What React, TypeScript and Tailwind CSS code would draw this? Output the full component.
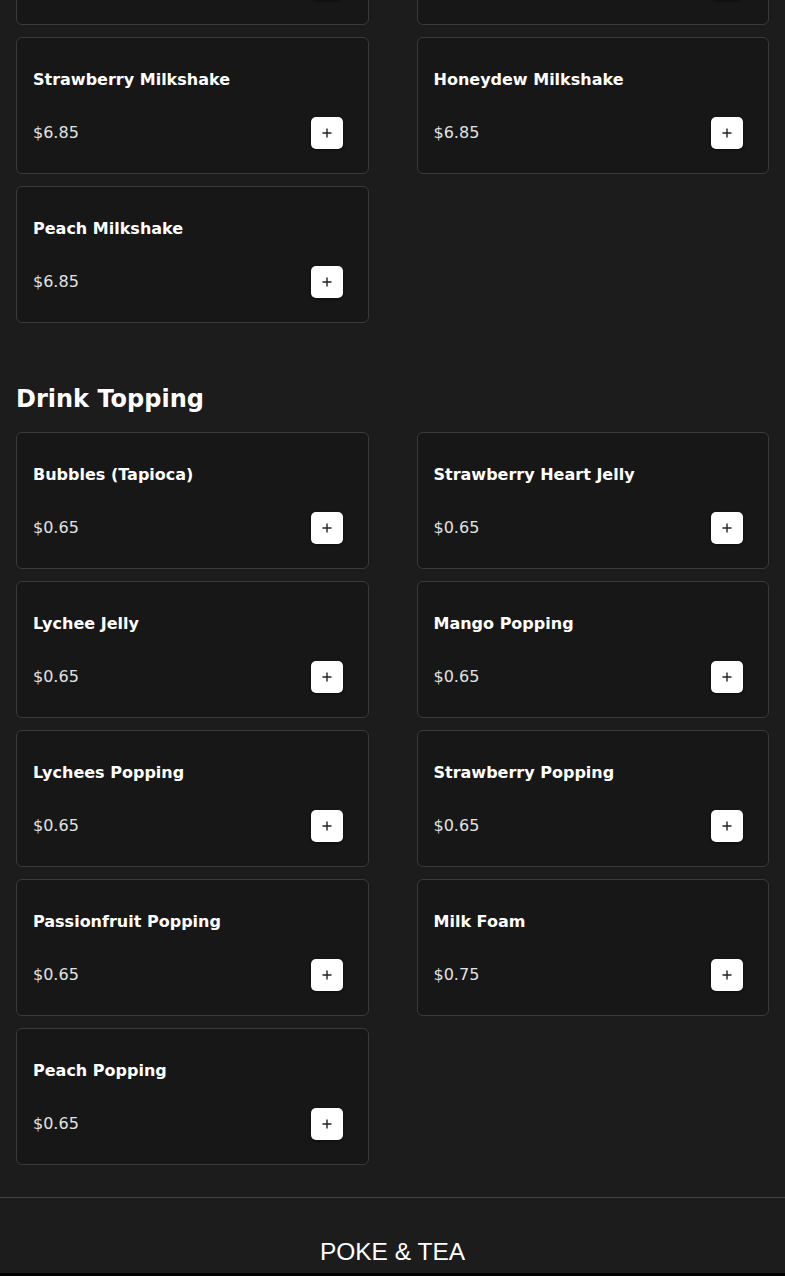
import React from 'react'

type Item = { name: string; price: string }

const TOP_ROW: Item[] = [
  { name: '', price: '' },
  { name: '', price: '' },
]

const MILKSHAKES: Item[] = [
  { name: 'Strawberry Milkshake', price: '$6.85' },
  { name: 'Honeydew Milkshake', price: '$6.85' },
  { name: 'Peach Milkshake', price: '$6.85' },
]

const TOPPINGS: Item[] = [
  { name: 'Bubbles (Tapioca)', price: '$0.65' },
  { name: 'Strawberry Heart Jelly', price: '$0.65' },
  { name: 'Lychee Jelly', price: '$0.65' },
  { name: 'Mango Popping', price: '$0.65' },
  { name: 'Lychees Popping', price: '$0.65' },
  { name: 'Strawberry Popping', price: '$0.65' },
  { name: 'Passionfruit Popping', price: '$0.65' },
  { name: 'Milk Foam', price: '$0.75' },
  { name: 'Peach Popping', price: '$0.65' },
]

function ItemCard({ item }: { item: Item }) {
  return (
    <div className="h-[137px] rounded-md border border-[#3a3a3a] bg-[#171717] px-4 pt-[30px] pb-6 flex flex-col">
      <div className="h-6 text-base leading-6 font-bold text-white">{item.name}</div>
      <div className="mt-[25px] flex items-center justify-between">
        <span className="h-6 text-base leading-6 text-[#e2e2e2]">{item.price}</span>
        <button className="mr-[9px] h-8 w-8 rounded-[5px] bg-white flex items-center justify-center shadow-[0_1px_3px_rgba(0,0,0,0.5)]">
          <svg width="10" height="10" viewBox="0 0 10 10">
            <path d="M5 0.5v9M0.5 5h9" stroke="#222" strokeWidth="1.4" />
          </svg>
        </button>
      </div>
    </div>
  )
}

function Grid({ items, className = '' }: { items: Item[]; className?: string }) {
  return (
    <div className={`grid grid-cols-2 gap-x-12 gap-y-3 ${className}`}>
      {items.map((it, i) => (
        <ItemCard key={i} item={it} />
      ))}
    </div>
  )
}

export default function App() {
  return (
    <div className="min-h-screen bg-[#1c1c1c] overflow-hidden" style={{ fontFamily: '"DejaVu Sans", sans-serif' }}>
      <div className="px-4">
        <Grid items={[...TOP_ROW, ...MILKSHAKES]} className="-mt-[112px]" />

        <h2 className="mt-[60px] mb-[17px] text-2xl leading-8 font-bold text-white">Drink Topping</h2>
        <Grid items={TOPPINGS} />
      </div>

      <footer className="mt-8 border-t border-[#444]">
        <div className="h-[75px] flex items-end justify-center pb-[5px]">
          <span className="text-[24.5px] leading-8 text-white" style={{ fontFamily: '"Liberation Sans", Arial, sans-serif' }}>
            POKE &amp; TEA
          </span>
        </div>
        <div className="h-6 bg-black" />
      </footer>
    </div>
  )
}
